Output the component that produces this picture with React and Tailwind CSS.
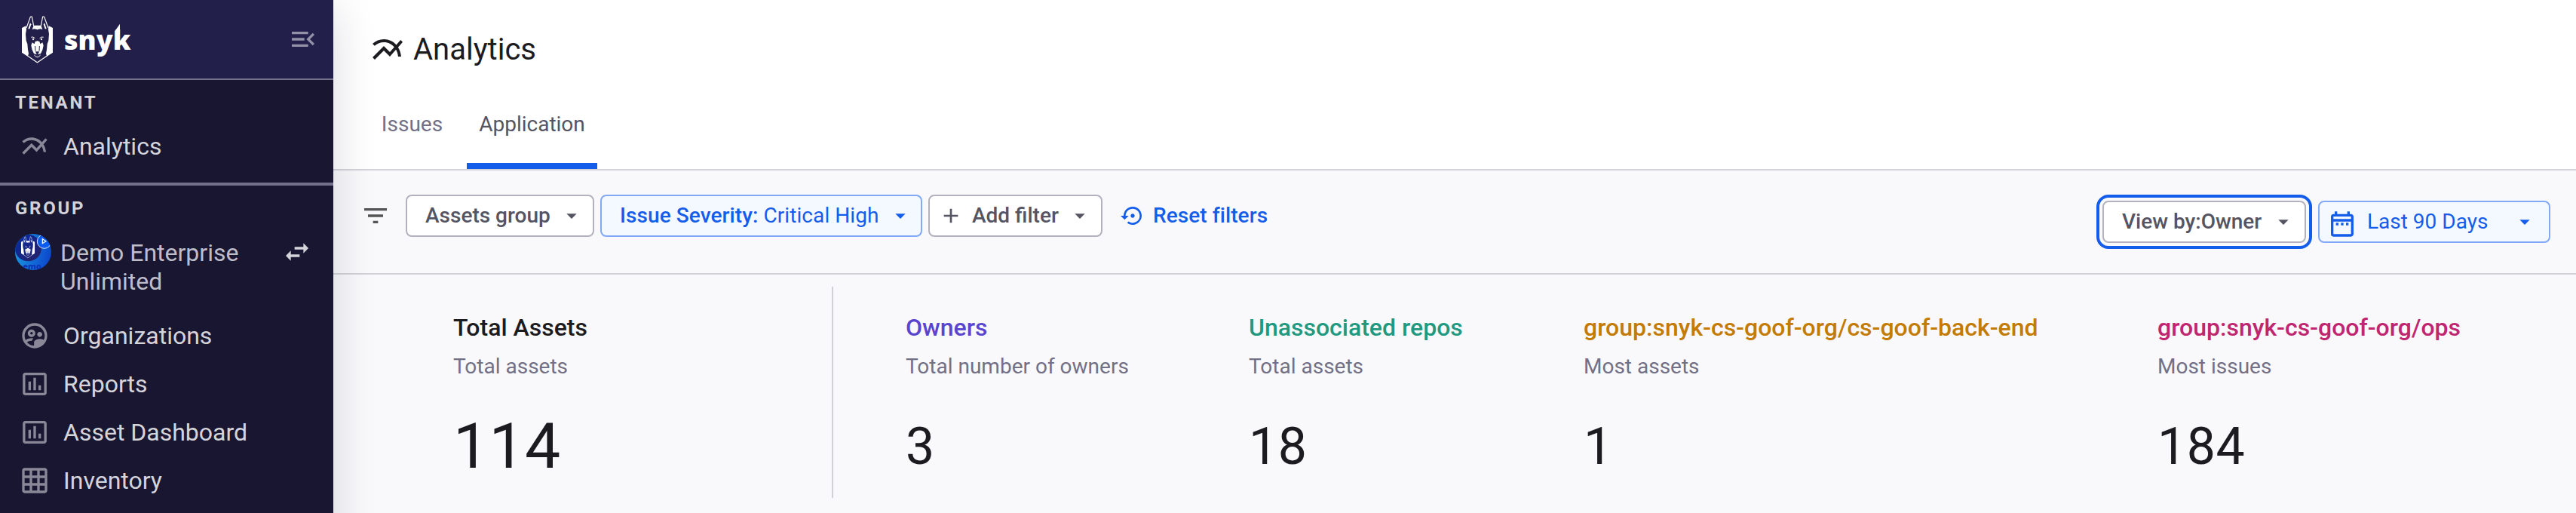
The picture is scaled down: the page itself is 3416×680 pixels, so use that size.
import React from 'react';
import {
  MdMultilineChart,
  MdOutlineSupervisedUserCircle,
  MdInsertChartOutlined,
  MdGridOn,
  MdMenuOpen,
  MdSwapHoriz,
  MdFilterList,
  MdArrowDropDown,
  MdAdd,
  MdSettingsBackupRestore,
  MdOutlineDateRange,
} from 'react-icons/md';

function DogMark({ cut }) {
  const half = (
    <>
      <path d="M0 48 L16 40 L18 54 L15 72 L17 98 L22 112 L24 134 L27 150 L24 160 L0 146 Z" fill="#fff" />
      <path d="M1 144 L62 186" stroke="#fff" strokeWidth="3.5" fill="none" />
      <path d="M18 48 L34 4 L40 3 L47 40" stroke="#fff" strokeWidth="3.5" fill="none" strokeLinejoin="round" />
      <path d="M25 52 L33 28 L37 34 L31 52 Z" fill="#fff" />
      <path d="M62.5 38 H47 L41 54 L50 52 L62.5 55 Z" fill="#fff" />
      <path d="M37 85 Q44 81 52 89" stroke="#fff" strokeWidth="3" fill="none" />
      <circle cx="45" cy="93" r="3.5" fill="#fff" />
      <path d="M62.5 100 L53 102 L50 112 L41 106 L37 118 L41 136 L48 150 L57 153 L62.5 150 Z" fill="#fff" />
      <path d="M53 120 L54 140" stroke={cut} strokeWidth="3" fill="none" />
      <path d="M49 156 Q55 164 62.5 164" stroke="#fff" strokeWidth="3" fill="none" />
    </>
  );
  return (
    <>
      {half}
      <g transform="translate(123 0) scale(-1 1)">{half}</g>
      <path d="M54 142 L69 142 L66 150 L61.5 153 L57 150 Z" fill={cut} />
    </>
  );
}

function Logo() {
  return (
    <div className="flex items-center">
      <svg className="h-[63px] w-[41px]" viewBox="0 0 123 189">
        <DogMark cut="#22204b" />
      </svg>
      <div className="relative ml-[14px] h-[63px] w-[90px]">
        <span className="block pl-px font-['Open_Sans','Noto_Sans',sans-serif] text-[36px] leading-[63px] font-extrabold text-white">
          snyk
        </span>
        <svg className="absolute top-0 left-0 h-[63px] w-[90px]" viewBox="0 0 90 63">
          <path d="M67 16.5 L71 16.5 L67 22 Z" fill="#22204b" />
          <path d="M68 20.7 L75 10.7 L75 20.7 Z" fill="#fff" />
        </svg>
      </div>
    </div>
  );
}

function Avatar() {
  return (
    <svg className="h-12 w-12 shrink-0" viewBox="0 0 144 144">
      <defs>
        <linearGradient id="ring" x1="0" y1="0.6" x2="1" y2="0.8">
          <stop offset="0" stopColor="#1a93e0" />
          <stop offset="1" stopColor="#0b43cc" />
        </linearGradient>
        <linearGradient id="disc" x1="0" y1="0" x2="1" y2="1">
          <stop offset="0.2" stopColor="#0b2a9c" />
          <stop offset="1" stopColor="#2b2060" />
        </linearGradient>
        <clipPath id="round">
          <circle cx="72" cy="72" r="72" />
        </clipPath>
      </defs>
      <g clipPath="url(#round)">
        <rect width="144" height="144" fill="url(#ring)" />
        <circle cx="52" cy="56" r="53" fill="url(#disc)" />
        <text x="68" y="141" textAnchor="middle" fontSize="33" fontWeight="700" fill="#0b2fb4" fontFamily="Open Sans, sans-serif">
          emo
        </text>
        <g transform="translate(24 10) scale(0.44 0.46)">
          <DogMark cut="#141f7a" />
        </g>
        <circle cx="116" cy="30" r="28" fill="#0b5cf0" stroke="#fff" strokeWidth="2.5" />
        <path d="M109 20 L123 29 L109 38 Z" fill="none" stroke="#fff" strokeWidth="3.5" />
      </g>
    </svg>
  );
}

function NavItem({ icon: Icon, label }) {
  return (
    <div className="flex h-16 items-center pl-[26px]">
      <Icon className="h-10 w-10 text-[#8a8898]" />
      <span className="ml-[18px] text-[32px] leading-[38px] text-[#d5d4da]">{label}</span>
    </div>
  );
}

function SectionLabel({ children }) {
  return (
    <div className="flex h-14 items-center pt-1 pl-5 text-2xl font-bold tracking-[2.7px] text-[#d3d2d9]">
      {children}
    </div>
  );
}

function Sidebar() {
  return (
    <aside className="z-10 flex h-[780px] w-[442px] shrink-0 flex-col bg-[#181631] shadow-[0_12px_54px_rgba(24,22,60,0.16)]">
      <div className="flex h-[106px] items-center justify-between border-b-2 border-[#72708a] bg-[#22204b] pr-5 pl-[29px]">
        <Logo />
        <MdMenuOpen className="h-10 w-10 text-[#9291a8]" />
      </div>
      <SectionLabel>TENANT</SectionLabel>
      <NavItem icon={MdMultilineChart} label="Analytics" />
      <div className="mt-4 h-1 bg-[#72708a]" />
      <SectionLabel>GROUP</SectionLabel>
      <div className="flex h-[111px] items-start pt-2 pr-7 pl-5">
        <Avatar />
        <div className="mt-1.5 ml-3 flex-1 text-[32px] leading-[38px] text-[#bfbdca]">
          Demo Enterprise
          <br />
          Unlimited
        </div>
        <MdSwapHoriz className="mt-1 h-10 w-10 text-[#d5d4da]" />
      </div>
      <NavItem icon={MdOutlineSupervisedUserCircle} label="Organizations" />
      <NavItem icon={MdInsertChartOutlined} label="Reports" />
      <NavItem icon={MdInsertChartOutlined} label="Asset Dashboard" />
      <NavItem icon={MdGridOn} label="Inventory" />
    </aside>
  );
}

const outlineButton = 'flex h-14 items-center rounded-lg border-2 border-[#b3b1bd] bg-white pr-3 text-[28px] font-medium text-[#555463]';
const blueButton = 'flex h-14 items-center rounded-lg border-2 border-[#82a9f6] bg-[#f4f9ff] text-[28px] text-[#145deb]';

function Caret() {
  return <MdArrowDropDown className="ml-3 h-8 w-8 shrink-0" />;
}

function FilterBar() {
  return (
    <div className="flex h-[138px] items-start justify-between border-b-2 border-[#d3d3d9] pr-[34px] pl-9 whitespace-nowrap">
      <div className="flex items-center pt-8">
        <MdFilterList className="h-10 w-10 text-[#555555]" />
        <button className={`${outlineButton} ml-5 w-[250px] justify-between pl-6`}>
          Assets group
          <Caret />
        </button>
        <button className={`${blueButton} ml-2 w-[427px] justify-between pr-3 pl-6`}>
          <span className="tracking-[0.08px]">
            <span className="font-medium">Issue Severity:</span> Critical High
          </span>
          <Caret />
        </button>
        <button className={`${outlineButton} ml-2 w-[231px] pl-3`}>
          <MdAdd className="mr-3 h-8 w-8 shrink-0" />
          Add filter
          <span className="ml-auto">
            <Caret />
          </span>
        </button>
        <button className="ml-6 flex h-14 items-center text-[28px] font-medium tracking-[0.08px] text-[#145deb]">
          <MdSettingsBackupRestore className="mr-[11px] h-8 w-8" />
          Reset filters
        </button>
      </div>
      <div className="flex items-center gap-4 pt-10">
        <button className={`${outlineButton} w-[270px] justify-between pl-6 outline-4 outline-offset-4 outline-[#145deb]`}>
          View by:Owner
          <Caret />
        </button>
        <button className={`${blueButton} w-[308px] pr-4 pl-2.5`}>
          <MdOutlineDateRange className="mt-1.5 h-10 w-10 shrink-0" />
          <span className="ml-[13px]">Last 90 Days</span>
          <span className="ml-auto">
            <Caret />
          </span>
        </button>
      </div>
    </div>
  );
}

function Stat({ title, subtitle, value, color, width }) {
  return (
    <div className={`${width} shrink-0`}>
      <div className={`text-[32px] leading-10 font-medium ${color}`}>{title}</div>
      <div className="mt-3 text-[28px] leading-10 text-[#727086]">{subtitle}</div>
      <div className="mt-[46px] text-[68px] leading-20 tracking-[0.5px] text-[#1c1b20]">{value}</div>
    </div>
  );
}

function Stats() {
  return (
    <div className="flex h-[316px] items-start pt-4 whitespace-nowrap">
      <div className="ml-[159px] w-[502px] shrink-0 pt-[34px]">
        <div className="text-[32px] leading-10 font-medium text-[#1c1b20]">Total Assets</div>
        <div className="mt-3 text-[28px] leading-10 text-[#727086]">Total assets</div>
        <div className="mt-[46px] text-[84px] leading-20 tracking-[0.3px] text-[#1c1b20]">114</div>
      </div>
      <div className="h-[280px] w-0.5 shrink-0 bg-[#d0d0d6]" />
      <div className="flex pt-[34px] pl-24">
        <Stat title="Owners" subtitle="Total number of owners" value="3" color="text-[#5a45cf]" width="w-[455px]" />
        <Stat title="Unassociated repos" subtitle="Total assets" value="18" color="text-[#1f9a80]" width="w-[444px]" />
        <Stat title="group:snyk-cs-goof-org/cs-goof-back-end" subtitle="Most assets" value="1" color="text-[#c47b04]" width="w-[761px]" />
        <Stat title="group:snyk-cs-goof-org/ops" subtitle="Most issues" value="184" color="text-[#c02670]" width="w-[500px]" />
      </div>
    </div>
  );
}

export default function App() {
  return (
    <div className="flex h-[680px] w-[3416px] overflow-hidden bg-[#f9f9fb] font-['Roboto',sans-serif]">
      <Sidebar />
      <main className="flex min-w-0 flex-1 flex-col">
        <header className="flex h-[226px] flex-col justify-between border-b-2 border-[#d3d3d9] bg-white pl-12">
          <div className="flex items-center pt-[42px] text-[#1c1b20]">
            <MdMultilineChart className="h-12 w-12" />
            <h1 className="ml-2.5 text-[40px] leading-12">Analytics</h1>
          </div>
          <nav className="flex h-[116px] gap-4 text-[28px]">
            <div className="flex h-[116px] w-[113px] justify-center pt-9 leading-[42px] text-[#727086]">Issues</div>
            <div className="flex h-[116px] w-[173px] justify-center border-b-8 border-[#145deb] pt-9 leading-[42px] text-[#555463]">
              Application
            </div>
          </nav>
        </header>
        <FilterBar />
        <Stats />
      </main>
    </div>
  );
}
